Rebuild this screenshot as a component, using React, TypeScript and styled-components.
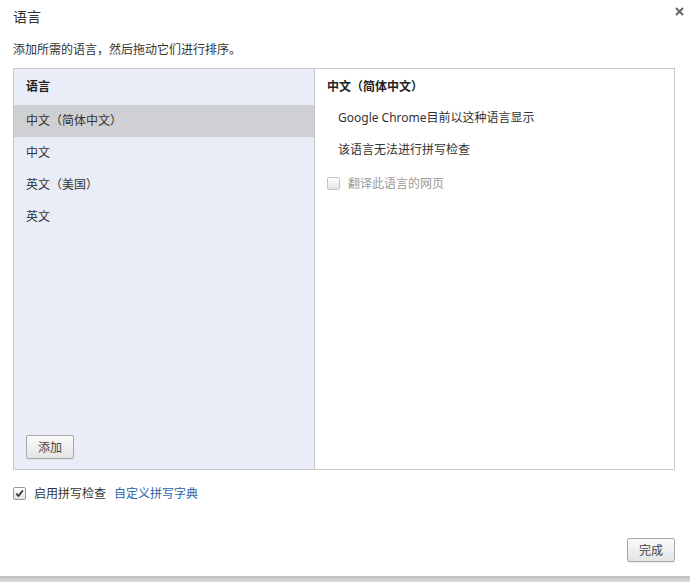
import React, { ReactElement } from "react";
import styled, { createGlobalStyle } from "styled-components";

const GlobalStyle = createGlobalStyle`
  html, body {
    margin: 0;
    padding: 0;
    background: #ffffff;
  }
  body {
    font-family: "Segoe UI", "Noto Sans", "Noto Sans CJK SC", sans-serif;
    font-size: 12px;
    color: #333333;
  }
`;

const DialogStyled = styled.div`
  position: relative;
  width: 692px;
  height: 576px;
  box-sizing: border-box;
  padding: 0 17px 0 13px;
  display: flex;
  flex-direction: column;
  background: #ffffff;
`;

const TitleStyled = styled.h1`
  margin: 0;
  height: 34px;
  line-height: 34px;
  font-size: 14px;
  font-weight: normal;
  color: #333333;
`;

const CloseStyled = styled.button`
  position: absolute;
  top: 4px;
  right: 6px;
  width: 14px;
  height: 14px;
  padding: 0;
  border: none;
  background: none;
  display: flex;
  align-items: center;
  justify-content: center;
`;

const DescriptionStyled = styled.p`
  margin: 6px 0 0;
  height: 20px;
  line-height: 20px;
  font-size: 12px;
  color: #333333;
`;

const PanelStyled = styled.div`
  margin-top: 8px;
  height: 402px;
  box-sizing: border-box;
  border: 1px solid #c8c8c8;
  display: grid;
  grid-template-columns: 301px 1fr;
`;

const ListColumnStyled = styled.div`
  display: flex;
  flex-direction: column;
  background: #e8edf7;
  border-right: 1px solid #c8c8c8;
  padding-bottom: 10px;
`;

const ColumnHeaderStyled = styled.div<{ $inset?: number }>`
  height: 36px;
  line-height: 36px;
  padding-left: ${(p) => p.$inset ?? 12}px;
  font-weight: bold;
  color: #222222;
`;

const LanguageRowStyled = styled.div<{ $selected?: boolean }>`
  height: 32px;
  line-height: 32px;
  padding-left: 12px;
  color: #333333;
  background: ${(p) => (p.$selected ? "#cfd0d3" : "transparent")};
`;

const ButtonStyled = styled.button`
  height: 24px;
  min-width: 48px;
  padding: 0 10px;
  box-sizing: border-box;
  border: 1px solid #a8a8a8;
  border-radius: 2px;
  background: linear-gradient(#fbfbfb, #e4e4e4);
  box-shadow: 0 1px 0 rgba(0, 0, 0, 0.06);
  font-family: inherit;
  font-size: 12px;
  color: #444444;
`;

const AddButtonStyled = styled(ButtonStyled)`
  margin-top: auto;
  margin-left: 12px;
  align-self: flex-start;
`;

const DetailColumnStyled = styled.div`
  display: flex;
  flex-direction: column;
  padding-left: 12px;
`;

const DetailLineStyled = styled.div`
  height: 32px;
  line-height: 26px;
  padding-left: 11px;
  color: #333333;
`;

const CheckRowStyled = styled.label<{ $disabled?: boolean }>`
  display: flex;
  align-items: center;
  gap: 8px;
  height: 28px;
  color: ${(p) => (p.$disabled ? "#9a9a9a" : "#333333")};
`;

const CheckBoxStyled = styled.span<{ $disabled?: boolean }>`
  width: 13px;
  height: 13px;
  box-sizing: border-box;
  border: 1px solid ${(p) => (p.$disabled ? "#c4c4c4" : "#9a9a9a")};
  border-radius: 2px;
  background: linear-gradient(#ffffff, #e2e2e2);
  display: flex;
  align-items: center;
  justify-content: center;
`;

const FooterStyled = styled.div`
  margin-top: 8px;
  display: flex;
  align-items: center;
  gap: 8px;
  height: 30px;
`;

const LinkStyled = styled.a`
  color: #2b63a8;
  text-decoration: none;
`;

const ActionsStyled = styled.div`
  margin-top: auto;
  margin-bottom: 14px;
  display: flex;
  justify-content: flex-end;
`;

const ShadowBarStyled = styled.div`
  width: 690px;
  height: 6px;
  background: linear-gradient(#bdbdbd, #dedede);
`;

const texts = {
  title: "语言",
  description: "添加所需的语言，然后拖动它们进行排序。",
  listHeader: "语言",
  detailHeader: "中文（简体中文）",
  displayInfo: "Google Chrome目前以这种语言显示",
  spellInfo: "该语言无法进行拼写检查",
  translate: "翻译此语言的网页",
  add: "添加",
  spellcheck: "启用拼写检查",
  dictionary: "自定义拼写字典",
  done: "完成",
};

const languages = ["中文（简体中文）", "中文", "英文（美国）", "英文"];

const CheckMark = (): ReactElement => (
  <svg width="9" height="9" viewBox="0 0 9 9">
    <path
      d="M1.2 4.6 L3.5 7 L7.8 1.5"
      fill="none"
      stroke="#333"
      strokeWidth="1.8"
    />
  </svg>
);

const App = (): ReactElement => {
  return (
    <>
      <GlobalStyle />
      <DialogStyled>
        <TitleStyled>{texts.title}</TitleStyled>
        <CloseStyled aria-label="close">
          <svg width="9" height="9" viewBox="0 0 9 9">
            <path d="M1 1 L8 8 M8 1 L1 8" stroke="#666" strokeWidth="2" />
          </svg>
        </CloseStyled>
        <DescriptionStyled>{texts.description}</DescriptionStyled>
        <PanelStyled>
          <ListColumnStyled>
            <ColumnHeaderStyled>{texts.listHeader}</ColumnHeaderStyled>
            {languages.map((language, index) => (
              <LanguageRowStyled key={language} $selected={index === 0}>
                {language}
              </LanguageRowStyled>
            ))}
            <AddButtonStyled>{texts.add}</AddButtonStyled>
          </ListColumnStyled>
          <DetailColumnStyled>
            <ColumnHeaderStyled $inset={0}>{texts.detailHeader}</ColumnHeaderStyled>
            <DetailLineStyled>{texts.displayInfo}</DetailLineStyled>
            <DetailLineStyled>{texts.spellInfo}</DetailLineStyled>
            <CheckRowStyled $disabled>
              <CheckBoxStyled $disabled />
              {texts.translate}
            </CheckRowStyled>
          </DetailColumnStyled>
        </PanelStyled>
        <FooterStyled>
          <CheckBoxStyled>
            <CheckMark />
          </CheckBoxStyled>
          <span>{texts.spellcheck}</span>
          <LinkStyled href="#">{texts.dictionary}</LinkStyled>
        </FooterStyled>
        <ActionsStyled>
          <ButtonStyled>{texts.done}</ButtonStyled>
        </ActionsStyled>
      </DialogStyled>
      <ShadowBarStyled />
    </>
  );
};

export default App;
